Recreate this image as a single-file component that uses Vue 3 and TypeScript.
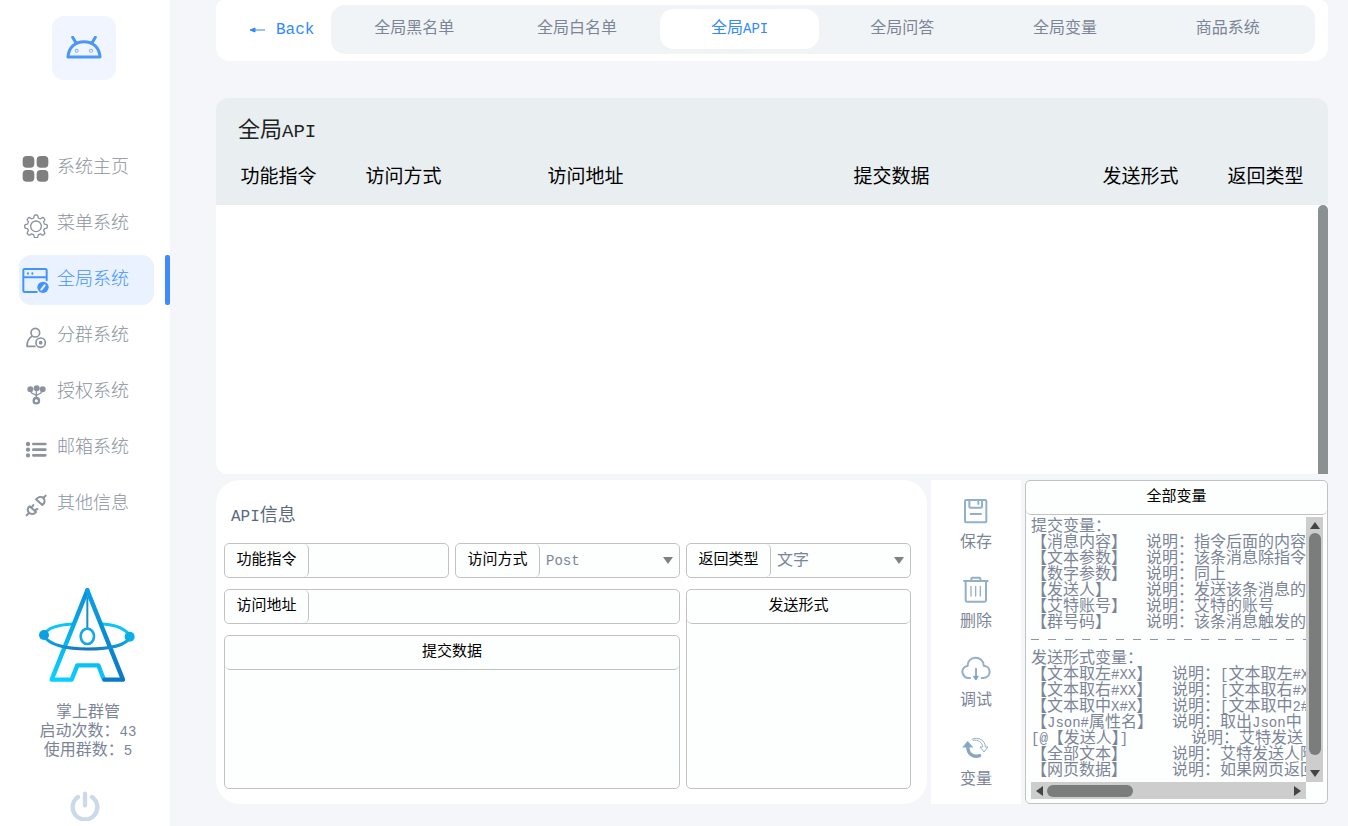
<script setup lang="ts">
import { h, ref, type FunctionalComponent } from 'vue'

interface Variable {
  name: string
  text: string
  wide?: boolean
}

// Splits a string into CJK and Latin runs so that Latin letters can be set smaller.
const MixedText: FunctionalComponent<{ text: string }> = (props) =>
  (props.text.match(/[\x20-\x7e]+|[^\x20-\x7e]+/g) ?? []).map((run) =>
    h('span', { class: /^[\x20-\x7e]/.test(run) ? 'latin' : 'cjk' }, run),
  )
MixedText.props = ['text']

const navItems = [
  { id: 'home', label: '系统主页' },
  { id: 'menu', label: '菜单系统' },
  { id: 'global', label: '全局系统' },
  { id: 'group', label: '分群系统' },
  { id: 'auth', label: '授权系统' },
  { id: 'mail', label: '邮箱系统' },
  { id: 'other', label: '其他信息' },
]
const activeNav = ref('global')

const tabs = ['全局黑名单', '全局白名单', '全局API', '全局问答', '全局变量', '商品系统']
const activeTab = ref('全局API')

const command = ref('')
const method = ref('Post')
const returnType = ref('文字')
const address = ref('')
const submitData = ref('')
const sendForm = ref('')

const tools = [
  { id: 'save', label: '保存' },
  { id: 'delete', label: '删除' },
  { id: 'debug', label: '调试' },
  { id: 'vars', label: '变量' },
]

const submitVars: Variable[] = [
  { name: '【消息内容】', text: '指令后面的内容' },
  { name: '【文本参数】', text: '该条消息除指令' },
  { name: '【数字参数】', text: '同上' },
  { name: '【发送人】', text: '发送该条消息的' },
  { name: '【艾特账号】', text: '艾特的账号' },
  { name: '【群号码】', text: '该条消息触发的' },
]
const sendVars: Variable[] = [
  { name: '【文本取左#XX】', text: '[文本取左#XX' },
  { name: '【文本取右#XX】', text: '[文本取右#XX' },
  { name: '【文本取中X#X】', text: '[文本取中2#X' },
  { name: '【Json#属性名】', text: '取出Json中' },
  { name: '[@【发送人】]', text: '艾特发送', wide: true },
  { name: '【全部文本】', text: '艾特发送人附' },
  { name: '【网页数据】', text: '如果网页返回' },
]

const gearPath = (() => {
  const points: string[] = []
  for (let i = 0; i < 96; i++) {
    const a = (i / 96) * Math.PI * 2
    const r = 30 + 4 * Math.tanh(3 * Math.cos(8 * a))
    points.push(`${(42 + r * Math.sin(a)).toFixed(1)} ${(46 - r * Math.cos(a)).toFixed(1)}`)
  }
  return `M${points.join('L')}Z`
})()
</script>

<template>
  <div class="app">
    <aside class="sidebar">
      <div class="brand">
        <svg viewBox="0 0 108 72" width="36" height="24" fill="none" stroke="#4a97f7" stroke-width="9" stroke-linecap="round" stroke-linejoin="round">
          <path d="M6 63C8 34 28 17 54 17S100 34 102 63ZM30 21L20 4M78 21L88 4" />
          <circle cx="32" cy="44" r="1" />
          <circle cx="75" cy="44" r="1" />
        </svg>
      </div>

      <nav aria-label="主菜单">
        <ul>
          <li v-for="item in navItems" :key="item.id">
            <a href="#" :class="{ active: item.id === activeNav }" @click.prevent="activeNav = item.id">
              <svg viewBox="0 0 81 81" width="27" height="27" fill="none" stroke="currentColor" stroke-width="5" stroke-linecap="round" stroke-linejoin="round" aria-hidden="true">
                <g v-if="item.id === 'home'" fill="#7f7f7f" stroke="none">
                  <rect x="2" y="3" width="35" height="35" rx="12" />
                  <rect x="44" y="3" width="35" height="35" rx="12" />
                  <rect x="2" y="45" width="35" height="35" rx="12" />
                  <rect x="44" y="45" width="35" height="35" rx="12" />
                </g>
                <g v-else-if="item.id === 'menu'" stroke-width="4">
                  <path :d="gearPath" />
                  <circle cx="42" cy="46" r="16" />
                </g>
                <g v-else-if="item.id === 'global'" stroke-width="6">
                  <path d="M44 75H8Q4 75 4 71V10Q4 6 8 6H70Q74 6 74 10V40M4 31H74" />
                  <path d="M18 19V20M31 19V20" />
                  <circle cx="63" cy="61" r="17" fill="currentColor" stroke="none" />
                  <path d="M58 68L68 55" stroke="#eaf2ff" />
                </g>
                <g v-else-if="item.id === 'group'" stroke-width="5">
                  <circle cx="40" cy="29" r="13" />
                  <path d="M30 40C20 46 15 56 15 70H39" />
                  <circle cx="56" cy="59" r="14" />
                  <circle cx="56" cy="59" r="3" />
                </g>
                <g v-else-if="item.id === 'auth'">
                  <path d="M25 30L29 42L43 49L57 42L62 30M43 27V56" stroke-width="4" />
                  <g fill="currentColor" stroke="none">
                    <circle cx="25" cy="31" r="9" />
                    <circle cx="44" cy="28" r="9" />
                    <circle cx="62" cy="31" r="9" />
                  </g>
                  <circle cx="43" cy="65" r="8" stroke-width="7" />
                </g>
                <g v-else-if="item.id === 'mail'">
                  <path d="M34 27H70M34 44H70M34 61H70" stroke-width="8" />
                  <path d="M18 27V27.1M18 44V44.1M18 61V61.1" stroke-width="13" />
                </g>
                <g v-else stroke-width="6">
                  <path d="M23 46L42 63C37 70 27 71 21 65S16 52 23 46ZM21 66L14 73M29 49L34 42M38 58L46 54" />
                  <path d="M42 25L61 42C69 36 70 27 64 21S49 18 42 25ZM64 21L71 14" />
                </g>
              </svg>
              <span>{{ item.label }}</span>
            </a>
            <i v-if="item.id === activeNav" class="marker"></i>
          </li>
        </ul>
      </nav>

      <div class="status">
        <svg viewBox="114 50 294 292" width="98" height="98" fill="none" stroke-linecap="round" stroke-linejoin="round" aria-hidden="true">
          <defs>
            <linearGradient id="legLeft" gradientUnits="userSpaceOnUse" x1="262" y1="60" x2="180" y2="330">
              <stop offset="0" stop-color="#0a8fd8" />
              <stop offset="1" stop-color="#08d0ff" />
            </linearGradient>
            <linearGradient id="legRight" gradientUnits="userSpaceOnUse" x1="262" y1="60" x2="370" y2="330">
              <stop offset="0" stop-color="#0aa2e4" />
              <stop offset="1" stop-color="#0a78c6" />
            </linearGradient>
            <linearGradient id="orbit" x1="0" y1="0" x2="1" y2="0">
              <stop offset="0" stop-color="#0aa5e6" />
              <stop offset="0.5" stop-color="#1a72bb" />
              <stop offset="1" stop-color="#0aa5e6" />
            </linearGradient>
          </defs>
          <path d="M132 195C142 175 176 165 218 163M308 163C350 165 380 180 390 200" stroke="#0cc4f5" stroke-width="9" />
          <path d="M262 62L155 330H215L232 287H295L310 326" stroke="url(#legLeft)" stroke-width="13" />
          <path d="M262 62L369 330H313" stroke="url(#legRight)" stroke-width="13" />
          <path d="M132 197C145 226 200 238 262 238S378 228 390 202" stroke="url(#orbit)" stroke-width="9" />
          <path d="M262 84V176" stroke="#168fd0" stroke-width="6" />
          <ellipse cx="262" cy="200" rx="20" ry="23" stroke="#13a9e8" stroke-width="8" />
          <circle cx="132" cy="196" r="15" fill="#0c9fe2" />
          <circle cx="389" cy="201" r="15" fill="#0caee8" />
        </svg>
        <p>掌上群管</p>
        <p><MixedText text="启动次数：43" /></p>
        <p><MixedText text="使用群数：5" /></p>
        <button type="button" class="power" aria-label="退出">
          <svg viewBox="0 0 90 90" width="30" height="30" fill="none" stroke="#ccd9e8" stroke-width="13" stroke-linecap="round">
            <path d="M24 18A37 37 0 1 0 66 18M45 8V43" />
          </svg>
        </button>
      </div>
    </aside>

    <main>
      <header class="topbar">
        <a href="#" class="back" @click.prevent>
          <svg viewBox="0 0 16 8" width="16" height="8" aria-hidden="true">
            <path d="M1 4L6 2V6ZM5 4H16" fill="#3089ff" stroke="#3089ff" />
          </svg>
          Back
        </a>
        <nav class="tabs" aria-label="全局系统">
          <button v-for="tab in tabs" :key="tab" type="button" :class="{ active: tab === activeTab }" @click="activeTab = tab">
            <MixedText :text="tab" />
          </button>
        </nav>
      </header>

      <section class="list-panel">
        <div class="list-head">
          <h1><MixedText text="全局API" /></h1>
          <table>
            <colgroup>
              <col class="c-small" /><col class="c-small" /><col class="c-address" /><col /><col class="c-small" /><col class="c-small" />
            </colgroup>
            <thead>
              <tr>
                <th>功能指令</th>
                <th>访问方式</th>
                <th>访问地址</th>
                <th>提交数据</th>
                <th>发送形式</th>
                <th>返回类型</th>
              </tr>
            </thead>
          </table>
        </div>
        <div class="list-body"><i class="thumb"></i></div>
      </section>

      <div class="bottom">
        <form class="editor" @submit.prevent>
          <h2><MixedText text="API信息" /></h2>
          <div class="fields">
            <div class="field">
              <label for="command">功能指令</label>
              <input id="command" v-model="command" type="text" />
            </div>
            <div class="field">
              <label for="method">访问方式</label>
              <div class="select">
                <select id="method" v-model="method" class="latin-value">
                  <option>Post</option>
                  <option>Get</option>
                </select>
                <i class="arrow"></i>
              </div>
            </div>
            <div class="field">
              <label for="return-type">返回类型</label>
              <div class="select">
                <select id="return-type" v-model="returnType">
                  <option>文字</option>
                  <option>图片</option>
                </select>
                <i class="arrow"></i>
              </div>
            </div>
            <div class="field address">
              <label for="address">访问地址</label>
              <input id="address" v-model="address" type="text" />
            </div>
            <div class="box submit">
              <label for="submit-data">提交数据</label>
              <textarea id="submit-data" v-model="submitData"></textarea>
            </div>
            <div class="box send">
              <label for="send-form">发送形式</label>
              <textarea id="send-form" v-model="sendForm"></textarea>
            </div>
          </div>
        </form>

        <div class="tools">
          <button v-for="tool in tools" :key="tool.id" type="button">
            <svg viewBox="0 0 90 90" width="30" height="30" fill="none" stroke="#92b0ca" stroke-width="6" stroke-linecap="round" stroke-linejoin="round" aria-hidden="true">
              <g v-if="tool.id === 'save'">
                <rect x="12" y="12" width="64" height="67" rx="3" />
                <path d="M25 12V32Q25 35 28 35H60Q63 35 63 32V12M52 17V24M29 54H60" />
              </g>
              <g v-else-if="tool.id === 'delete'">
                <path d="M9 18H80M31 17V11Q31 8 34 8H55Q58 8 58 11V17M14 20V76Q14 80 18 80H71Q75 80 75 76V20" />
                <path d="M30 34V63M44 34V63M58 34V63" stroke-width="4" />
              </g>
              <g v-else-if="tool.id === 'debug'">
                <path d="M27 72H20C6 70 -1 52 9 41Q14 36 20 36C19 4 66 2 68 35C91 36 93 70 67 72H62" />
                <path d="M45 44V74" />
                <path d="M38 67H52L45 77Z" fill="#7ea3c2" stroke="#7ea3c2" stroke-width="3" />
              </g>
              <g v-else>
                <path d="M20 38C20 64 36 74 56 68" stroke="#86a6c3" stroke-width="10" />
                <path d="M6 42L20 25L35 42Z" fill="#86a6c3" stroke-width="2" />
                <path d="M33 19C52 10 73 22 73 42H81L69 57L57 42H65C65 28 50 19 37 22" stroke-width="3" />
              </g>
            </svg>
            <span>{{ tool.label }}</span>
          </button>
        </div>

        <section class="variables">
          <h3>全部变量</h3>
          <div class="viewer">
            <div class="content">
              <p>提交变量：</p>
              <p v-for="v in submitVars" :key="v.name" class="row">
                <span class="name"><MixedText :text="v.name" /></span>说明：<MixedText :text="v.text" />
              </p>
              <div class="dashes"></div>
              <p>发送形式变量：</p>
              <p v-for="v in sendVars" :key="v.name" class="row">
                <span class="name long" :class="{ wide: v.wide }"><MixedText :text="v.name" /></span>说明：<MixedText :text="v.text" />
              </p>
            </div>
            <div class="bar vertical"><i class="tip up"></i><i class="grip"></i><i class="tip down"></i></div>
            <div class="bar horizontal"><i class="tip left"></i><i class="grip"></i><i class="tip right"></i></div>
          </div>
        </section>
      </div>
    </main>
  </div>
</template>

<style>
body {
  margin: 0;
  background: #f4f6fa;
}
.latin {
  font-size: 14px;
}
</style>

<style scoped>
* {
  box-sizing: border-box;
}
.app {
  display: flex;
  min-height: 100vh;
  font-family: "Liberation Mono", "Noto Sans CJK SC", monospace;
  font-size: 16px;
  color: #7c8597;
}
p, h1, h2, h3, ul {
  margin: 0;
  padding: 0;
  font-weight: 400;
}
button, input, select, textarea {
  font: inherit;
  color: inherit;
  margin: 0;
  padding: 0;
  border: 0;
  background: none;
  outline: none;
}
i, svg {
  display: block;
  flex: none;
}

/* Sidebar */
.sidebar {
  flex: none;
  width: 170px;
  display: flex;
  flex-direction: column;
  background: #fff;
}
.brand {
  width: 64px;
  height: 64px;
  margin: 16px 0 63px 52px;
  border-radius: 12px;
  background: #f0f5ff;
  display: grid;
  place-items: center;
}
.sidebar ul {
  list-style: none;
  padding-left: 19px;
  display: flex;
  flex-direction: column;
  gap: 6px;
}
.sidebar li {
  display: flex;
  justify-content: space-between;
  height: 50px;
}
.sidebar li a {
  width: 135px;
  padding-left: 3px;
  border-radius: 12px;
  display: flex;
  align-items: center;
  gap: 8px;
  color: #8b93a0;
  font-size: 18px;
  font-weight: 300;
  line-height: 24px;
  text-decoration: none;
}
.sidebar li a.active {
  background: #eaf2ff;
  color: #4292ff;
}
.marker {
  width: 5px;
  border-radius: 2px;
  background: #3d8bff;
}
.status {
  margin-top: auto;
  padding: 20px 0 5px;
  display: flex;
  flex-direction: column;
  align-items: center;
  text-align: center;
  line-height: 19px;
}
.status > svg {
  margin: 0 0 20px 4px;
}
.status p {
  padding-left: 6px;
}
.power {
  margin-top: 30px;
}

/* Main area */
main {
  flex: 1;
  min-width: 0;
  padding: 0 20px 22px 46px;
  display: flex;
  flex-direction: column;
}
.topbar {
  display: flex;
  padding: 5px 13px 7px 33px;
  margin-bottom: 37px;
  border-radius: 8px 8px 14px 14px;
  background: #fff;
}
.back {
  width: 82px;
  display: flex;
  align-items: center;
  gap: 11px;
  color: #3089ff;
  text-decoration: none;
}
.tabs {
  flex: 1;
  display: grid;
  grid-template-columns: repeat(6, 1fr);
  gap: 4px;
  height: 49px;
  padding: 4px 8px 5px 4px;
  border-radius: 14px;
  background: #f1f4f6;
}
.tabs button {
  border-radius: 14px;
  line-height: 24px;
}
.tabs .active {
  background: #fff;
  color: #3089ff;
}

.list-panel {
  flex: 1;
  display: flex;
  flex-direction: column;
  margin-bottom: 6px;
  border-radius: 12px 12px 0 12px;
  overflow: hidden;
  background: #fff;
}
.list-head {
  padding-top: 16px;
  background: #e9eef0;
  color: #000;
}
h1 {
  padding-left: 22px;
  line-height: 30px;
  color: #222;
}
h1 :deep(.cjk) {
  font-size: 22px;
}
h1 :deep(.latin) {
  font-size: 19px;
}
table {
  width: 100%;
  table-layout: fixed;
  border-collapse: collapse;
}
.c-small {
  width: 125px;
}
.c-address {
  width: 239px;
}
th {
  height: 58px;
  padding: 3px 0 0;
  font-size: 19px;
  font-weight: 400;
  line-height: 28px;
}
.list-body {
  flex: 1;
  min-height: 200px;
  display: flex;
  justify-content: flex-end;
}
.thumb {
  width: 10px;
  border-radius: 5px 5px 0 0;
  background: #8b9091;
}

/* Bottom row */
.bottom {
  display: flex;
  gap: 4px;
}
.editor {
  flex: 1;
  min-width: 0;
  padding: 21px 16px 15px 8px;
  border-radius: 24px;
  background: #fff;
}
h2 {
  height: 42px;
  padding-left: 7px;
  line-height: 28px;
  color: #5b6a80;
}
h2 :deep(.cjk) {
  font-size: 18px;
}
h2 :deep(.latin) {
  font-size: 16px;
}
.fields {
  display: grid;
  grid-template-columns: repeat(3, 1fr);
  grid-template-rows: 35px 35px 154px;
  gap: 11px 6px;
}
.field, .box {
  display: flex;
  min-width: 0;
  border: 1px solid #c2c2c2;
  border-radius: 5px;
  background: #fdfefe;
}
.address, .submit {
  grid-column: 1 / 3;
}
.send {
  grid-column: 3;
  grid-row: 2 / 4;
}
.box {
  flex-direction: column;
}
label {
  flex: none;
  color: #000;
  font-size: 15px;
  line-height: 34px;
  height: 33px;
  text-align: center;
  border-radius: 5px;
}
.field label {
  width: 84px;
  border-right: 1px solid #c2c2c2;
}
.box label {
  height: 34px;
  border-bottom: 1px solid #c2c2c2;
}
.field input {
  flex: 1;
  min-width: 0;
  padding: 0 6px;
}
.box textarea {
  flex: 1;
  padding: 6px;
  resize: none;
}
.select {
  flex: 1;
  min-width: 0;
  display: grid;
  align-items: center;
}
.select > * {
  grid-area: 1 / 1;
}
select {
  width: 100%;
  height: 100%;
  padding-left: 6px;
  appearance: none;
}
.latin-value {
  font-size: 14px;
}
.arrow {
  justify-self: end;
  margin-right: 6px;
  border: 5px solid transparent;
  border-top: 7px solid #808080;
  border-bottom: 0;
  pointer-events: none;
}

.tools {
  flex: none;
  width: 90px;
  padding: 16px 0 14px;
  display: flex;
  flex-direction: column;
  justify-content: space-between;
  background: #fff;
}
.tools button {
  display: flex;
  flex-direction: column;
  align-items: center;
  gap: 7px;
  line-height: 20px;
}

.variables {
  flex: none;
  width: 303px;
  display: flex;
  flex-direction: column;
  border: 1px solid #c2c2c2;
  border-radius: 5px;
  background: #fdfefe;
}
h3 {
  height: 34px;
  border-bottom: 1px solid #c2c2c2;
  border-radius: 5px;
  color: #000;
  font-size: 15px;
  line-height: 34px;
  text-align: center;
}
.viewer {
  flex: 1;
  display: grid;
  grid-template: 1fr 17px / 1fr 17px;
  padding: 2px 4px 4px 5px;
}
.content {
  min-width: 0;
  height: 265px;
  padding-top: 2px;
  overflow: auto;
  scrollbar-width: none;
  white-space: nowrap;
  line-height: 16px;
}
.content p {
  height: 16px;
}
.row {
  display: flex;
}
.name {
  flex: none;
  width: 115px;
}
.name.long {
  width: 141px;
}
.name.wide {
  width: 160px;
}
.dashes {
  height: 20px;
  background: linear-gradient(#8d96a3, #8d96a3) 0 8px / 100% 1px no-repeat;
  mask: repeating-linear-gradient(90deg, #000 0 8px, transparent 8px 17px);
}
.bar {
  display: flex;
  align-items: center;
  background: #cdcdcd;
}
.vertical {
  flex-direction: column;
  padding: 5px 0;
  gap: 4px;
}
.vertical .grip {
  width: 12px;
  height: 222px;
  margin-bottom: auto;
}
.horizontal {
  padding: 0 5px;
  gap: 4px;
}
.horizontal .grip {
  width: 86px;
  height: 12px;
  margin-right: auto;
}
.grip {
  border-radius: 6px;
  background: #7b7d7d;
}
.tip {
  border: 5px solid transparent;
}
.up {
  border-top: 0;
  border-bottom: 7px solid #444;
}
.down {
  border-bottom: 0;
  border-top: 7px solid #444;
}
.left {
  border-left: 0;
  border-right: 7px solid #444;
}
.right {
  border-right: 0;
  border-left: 7px solid #444;
}
</style>
